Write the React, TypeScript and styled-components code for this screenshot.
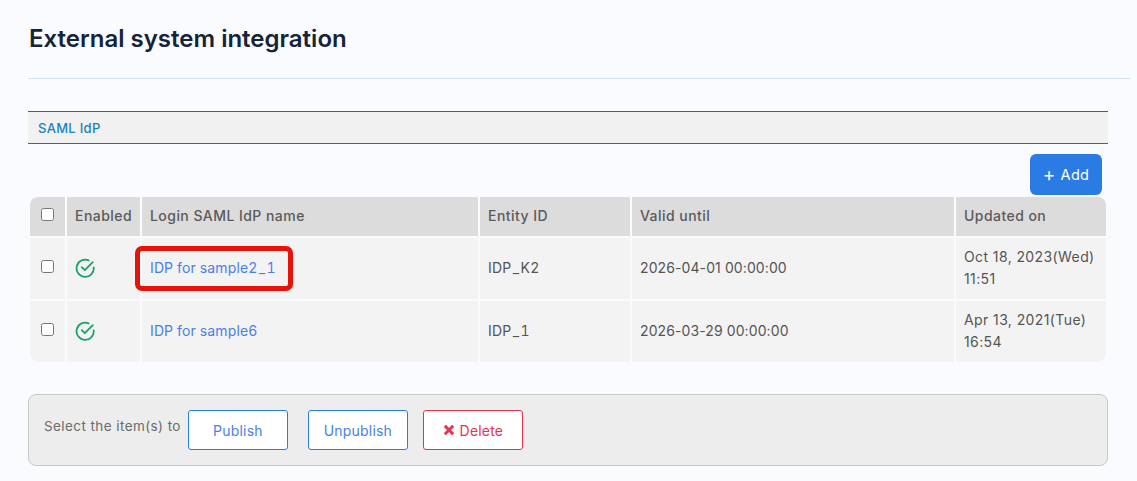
import React from "react";
import styled, { createGlobalStyle } from "styled-components";

const GlobalStyle = createGlobalStyle`
  html, body {
    margin: 0;
    padding: 0;
    background: #fafbfe;
    font-family: "Inter", "Liberation Sans", sans-serif;
  }
`;

const rows = [
  { name: "IDP for sample2_1", entity: "IDP_K2", valid: "2026-04-01 00:00:00", date: "Oct 18, 2023(Wed)", time: "11:51", marked: true },
  { name: "IDP for sample6", entity: "IDP_1", valid: "2026-03-29 00:00:00", date: "Apr 13, 2021(Tue)", time: "16:54", marked: false },
];

const CheckCircle = () => (
  <svg width="20" height="20" viewBox="0 0 20 20" fill="none" stroke="#1ba06a" strokeWidth="1.8" strokeLinecap="round" strokeLinejoin="round">
    <path d="M18.7 9.4A8.6 8.6 0 1 1 13.6 2.4" />
    <path d="M6.8 9.2l3 3 8-8" />
  </svg>
);

// the underscore sits wider in the reference font
const spaced = (text: string) => {
  const [head, tail] = text.split("_");
  return (
    <>
      {head}<Score>_</Score>{tail}
    </>
  );
};

export default function App() {
  return (
    <Page>
      <GlobalStyle />
      <Title>External system integration</Title>
      <Rule />
      <SectionBar>SAML IdP</SectionBar>
      <Toolbar>
        <AddButton><Plus>+</Plus>Add</AddButton>
      </Toolbar>
      <Table>
        <colgroup>
          <col width="35" />
          <col width="73" />
          <col width="336" />
          <col width="150" />
          <col width="322" />
          <col width="150" />
        </colgroup>
        <thead>
          <tr>
            <HeadCell $center><Check type="checkbox" /></HeadCell>
            <HeadCell>Enabled</HeadCell>
            <HeadCell>Login SAML IdP name</HeadCell>
            <HeadCell>Entity ID</HeadCell>
            <HeadCell>Valid until</HeadCell>
            <HeadCell>Updated on</HeadCell>
          </tr>
        </thead>
        <tbody>
          {rows.map((r) => (
            <tr key={r.name}>
              <Cell $center><Check type="checkbox" /></Cell>
              <Cell><IconWrap><CheckCircle /></IconWrap></Cell>
              <Cell>
                <NameLink>
                  {r.name.includes("_") ? spaced(r.name) : r.name}
                  {r.marked && <Highlight />}
                </NameLink>
              </Cell>
              <Cell $kind="entity">{spaced(r.entity)}</Cell>
              <Cell $kind="stamp">{r.valid}</Cell>
              <Cell>{r.date}<br />{r.time}</Cell>
            </tr>
          ))}
        </tbody>
      </Table>
      <ActionPanel>
        <ActionLabel>Select the item(s) to</ActionLabel>
        <ActionButton>Publish</ActionButton>
        <ActionButton $gap>Unpublish</ActionButton>
        <ActionButton $danger>
          <svg width="12" height="12" viewBox="0 0 12 12" fill="none" stroke="#e8304f" strokeWidth="3">
            <path d="M1.8 1.8l8.4 8.4M10.2 1.8l-8.4 8.4" />
          </svg>
          Delete
        </ActionButton>
      </ActionPanel>
    </Page>
  );
}

const Page = styled.div`
  width: 1137px;
  height: 481px;
  padding: 24px 0 0 28px;
  box-sizing: border-box;
  overflow: hidden;
`;

const Title = styled.h1`
  margin: 0 0 0 1px;
  font-size: 24px;
  line-height: 30px;
  font-weight: 600;
  color: #15233b;
`;

const Rule = styled.div`
  width: 1102px;
  height: 1px;
  margin-top: 24px;
  background: #d3e1ef;
`;

const SectionBar = styled.div`
  width: 1080px;
  height: 33px;
  margin-top: 32px;
  padding-left: 10px;
  box-sizing: border-box;
  border-top: 1px solid #1c6f9f;
  border-bottom: 1px solid #1c6f9f;
  background: #f1f1f1;
  color: #1a82bd;
  font-size: 13px;
  font-weight: 500;
  letter-spacing: 0.3px;
  line-height: 32px;
`;

const Toolbar = styled.div`
  width: 1074px;
  display: flex;
  justify-content: flex-end;
  margin-top: 10px;
`;

const AddButton = styled.button`
  width: 72px;
  height: 41px;
  display: flex;
  align-items: center;
  justify-content: center;
  gap: 5px;
  border: none;
  border-radius: 6px;
  background: #2b7be5;
  color: #fff;
  font: 400 14.5px "Inter", sans-serif;
  letter-spacing: 0.3px;
`;

const Plus = styled.span`
  font-size: 19px;
  line-height: 19px;
`;

const Table = styled.table`
  width: 1080px;
  margin-top: 0;
  table-layout: fixed;
  border-collapse: separate;
  border-spacing: 2px;
  font-size: 14px;
`;

const HeadCell = styled.th<{ $center?: boolean }>`
  height: 39px;
  box-sizing: border-box;
  padding: 0 0 2px ${(p) => (p.$center ? 0 : 8)}px;
  background: #dcdcdc;
  color: #5a5a5a;
  font-weight: 500;
  letter-spacing: 0.45px;
  text-align: ${(p) => (p.$center ? "center" : "left")};
  &:first-child { border-top-left-radius: 8px; }
  &:last-child { border-top-right-radius: 8px; }
`;

const cellSpacing = { entity: 0.2, stamp: 0.1, plain: 0.4 };

const Cell = styled.td<{ $center?: boolean; $kind?: "entity" | "stamp" }>`
  height: 61px;
  box-sizing: border-box;
  padding: 0 0 2px ${(p) => (p.$center ? 0 : 8)}px;
  background: #f3f3f3;
  color: #555;
  line-height: 22px;
  letter-spacing: ${(p) => cellSpacing[p.$kind ?? "plain"]}px;
  font-variant-numeric: ${(p) => (p.$kind === "entity" ? "tabular-nums" : "normal")};
  text-align: ${(p) => (p.$center ? "center" : "left")};
  tr:last-child > &:first-child { border-bottom-left-radius: 8px; }
  tr:last-child > &:last-child { border-bottom-right-radius: 8px; }
`;

const Check = styled.input`
  width: 13px;
  height: 13px;
  margin: 0 0 4px;
  vertical-align: middle;
`;

const IconWrap = styled.span`
  display: block;
  height: 20px;
`;

const NameLink = styled.a`
  position: relative;
  display: inline-block;
  color: #4a7fe8;
  letter-spacing: 0.13px;
  font-variant-numeric: tabular-nums;
`;

const Score = styled.span`
  margin: 0 1.3px;
`;

const Highlight = styled.span`
  position: absolute;
  left: -15px;
  right: -17px;
  top: -11px;
  bottom: -12px;
  border: 5px solid #e5130a;
  border-radius: 7px;
`;

const ActionPanel = styled.div`
  width: 1080px;
  height: 72px;
  margin-top: 30px;
  box-sizing: border-box;
  padding: 15px 0 0 15px;
  display: flex;
  align-items: flex-start;
  border: 1px solid #c9c9c9;
  border-radius: 8px;
  background: #ededed;
`;

const ActionLabel = styled.span`
  margin: 6px 7px 0 0;
  line-height: 20px;
  font-size: 13.5px;
  letter-spacing: 0.42px;
  color: #6b6b6b;
`;

const ActionButton = styled.button<{ $gap?: boolean; $danger?: boolean }>`
  width: 100px;
  height: 40px;
  margin-left: ${(p) => (p.$gap ? 20 : p.$danger ? 15 : 0)}px;
  display: flex;
  align-items: center;
  justify-content: center;
  gap: 5px;
  border: 1px solid ${(p) => (p.$danger ? "#e8304f" : "#2b7be5")};
  border-radius: 3px;
  background: #fff;
  color: ${(p) => (p.$danger ? "#e8304f" : "#4a7fe8")};
  font: 400 14px "Inter", sans-serif;
  letter-spacing: 0.2px;
`;
